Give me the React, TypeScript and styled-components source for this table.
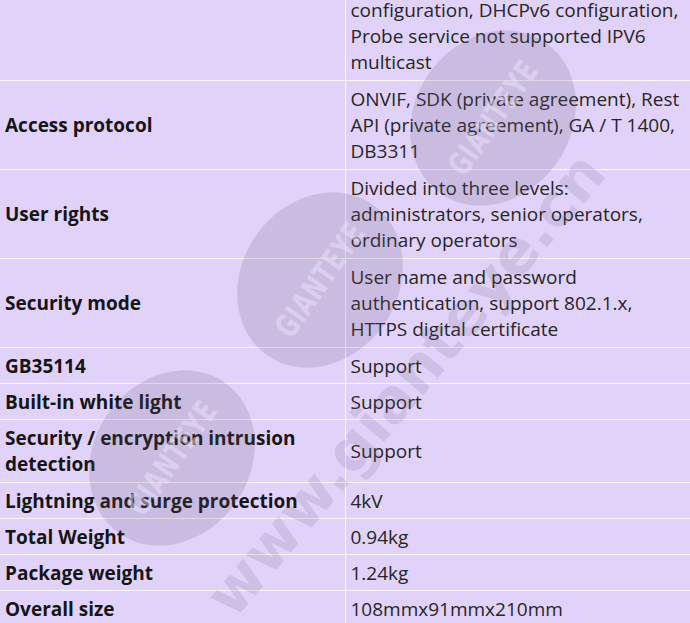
import styled, { createGlobalStyle } from 'styled-components';

const GlobalStyle = createGlobalStyle`
  html, body {
    margin: 0;
    padding: 0;
    background: #e1d2fa;
  }
`;

const Page = styled.div`
  position: relative;
  width: 690px;
  height: 623px;
  overflow: hidden;
  background: #e1d2fa;
  font-family: "Open Sans", "Noto Sans", sans-serif;
  color: #222;
`;

const SpecTable = styled.table`
  width: 690px;
  margin-top: -8px;
  border-collapse: collapse;
  border-style: hidden;
  table-layout: fixed;
`;

const Cell = styled.td<{ $label?: boolean; $single?: boolean }>`
  border: 1px solid #fbf8ff;
  padding: 5px 2px ${(p) => (p.$single ? 4 : 5)}px 5px;
  width: 345px;
  font-size: 19px;
  line-height: 26px;
  vertical-align: middle;
  font-weight: ${(p) => (p.$label ? 700 : 400)};
  color: ${(p) => (p.$label ? '#151515' : '#262626')};
  box-sizing: border-box;
`;

const Line = styled.span`
  display: block;
  white-space: nowrap;
`;

const Watermark = styled.div`
  position: absolute;
  inset: 0;
  pointer-events: none;
  overflow: hidden;
`;

const Seal = styled.div<{ $x: number; $y: number }>`
  position: absolute;
  left: ${(p) => p.$x - 92}px;
  top: ${(p) => p.$y - 78}px;
  width: 184px;
  height: 156px;
  border-radius: 50%;
  background: rgba(105, 95, 115, 0.19);
  transform: rotate(-55deg);
  display: flex;
  align-items: center;
  justify-content: center;
`;

const SealText = styled.span`
  font-family: "DejaVu Sans Condensed", "DejaVu Sans", sans-serif;
  font-weight: 700;
  font-size: 32px;
  letter-spacing: 1px;
  color: rgba(236, 226, 252, 0.5);
  transform: scaleX(0.78);
`;

const SiteText = styled.div`
  position: absolute;
  left: 405px;
  top: 384px;
  transform: translate(-50%, -50%) rotate(-50deg);
  font-family: "DejaVu Sans", sans-serif;
  font-weight: 700;
  font-size: 60px;
  white-space: nowrap;
  color: rgba(110, 100, 120, 0.17);
`;

type Spec = { label: string[]; value: string[] };

const specs: Spec[] = [
  { label: [''], value: ['configuration, DHCPv6 configuration,', 'Probe service not supported IPV6', 'multicast'] },
  { label: ['Access protocol'], value: ['ONVIF, SDK (private agreement), Rest', 'API (private agreement), GA / T 1400,', 'DB3311'] },
  { label: ['User rights'], value: ['Divided into three levels:', 'administrators, senior operators,', 'ordinary operators'] },
  { label: ['Security mode'], value: ['User name and password', 'authentication, support 802.1.x,', 'HTTPS digital certificate'] },
  { label: ['GB35114'], value: ['Support'] },
  { label: ['Built-in white light'], value: ['Support'] },
  { label: ['Security / encryption intrusion', 'detection'], value: ['Support'] },
  { label: ['Lightning and surge protection'], value: ['4kV'] },
  { label: ['Total Weight'], value: ['0.94kg'] },
  { label: ['Package weight'], value: ['1.24kg'] },
  { label: ['Overall size'], value: ['108mmx91mmx210mm'] },
];

const seals = [
  { x: 493, y: 118 },
  { x: 320, y: 280 },
  { x: 172, y: 458 },
];

export default function App() {
  return (
    <>
      <GlobalStyle />
      <Page>
        <SpecTable>
          <tbody>
            {specs.map((spec, i) => {
              const single = Math.max(spec.label.length, spec.value.length) === 1;
              return (
                <tr key={i}>
                  <Cell $label $single={single}>
                    {spec.label.map((l, j) => (
                      <Line key={j}>{l || '\u00a0'}</Line>
                    ))}
                  </Cell>
                  <Cell $single={single}>
                    {spec.value.map((v, j) => (
                      <Line key={j}>{v}</Line>
                    ))}
                  </Cell>
                </tr>
              );
            })}
          </tbody>
        </SpecTable>
        <Watermark>
          {seals.map((s, i) => (
            <Seal key={i} $x={s.x} $y={s.y}>
              <SealText>GIANTEYE</SealText>
            </Seal>
          ))}
          <SiteText>www.gianteye.cn</SiteText>
        </Watermark>
      </Page>
    </>
  );
}
